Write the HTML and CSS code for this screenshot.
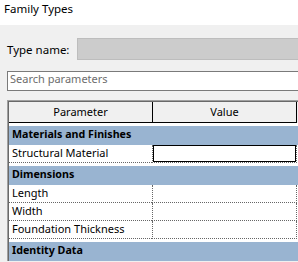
FILE: index.html
```html
<!DOCTYPE html>
<html>
<head>
<meta charset="utf-8">
<link rel="stylesheet" href="styles.css">
</head>
<body>
<div class="title">Family Types</div>
<div class="panel">
  <div class="typerow">
    <span class="label">Type name:</span>
    <div class="typebox"></div>
  </div>
  <div class="search">Search parameters</div>
  <div class="grid">
    <div class="gridin">
      <div class="head">
        <div class="hcell">Parameter</div>
        <div class="hcell">Value</div>
        <div class="hrest"></div>
      </div>
      <div class="section">Materials and Finishes</div>
      <div class="row">
        <div class="pcell">Structural Material</div>
        <div class="vcell"><div class="editbox"></div></div>
      </div>
      <div class="section">Dimensions</div>
      <div class="row">
        <div class="pcell">Length</div>
        <div class="vcell"></div>
      </div>
      <div class="row">
        <div class="pcell">Width</div>
        <div class="vcell"></div>
      </div>
      <div class="row">
        <div class="pcell">Foundation Thickness</div>
        <div class="vcell"></div>
      </div>
      <div class="section">Identity Data</div>
    </div>
  </div>
</div>
</body>
</html>
```

FILE: styles.css
```css
html, body {
  margin: 0;
  padding: 0;
}
body {
  width: 298px;
  height: 262px;
  overflow: hidden;
  background: #f0f0f0;
  font-family: "Segoe UI", "Noto Sans", sans-serif;
  font-size: 11px;
  color: #000;
}
.title {
  height: 25px;
  box-sizing: border-box;
  padding: 1px 0 0 4px;
  line-height: 16px;
  font-size: 11.5px;
  background: #fff;
}
.panel {
  padding-left: 7px;
}
.typerow {
  display: flex;
  align-items: center;
  margin-top: 13px;
}
.label {
  width: 70px;
  font-size: 11.5px;
}
.typebox {
  flex: 1;
  height: 22px;
  box-sizing: border-box;
  background: #cccccc;
  border: 1px solid #bdbdbd;
  border-right: none;
}
.search {
  margin-top: 11px;
  height: 20px;
  box-sizing: border-box;
  border: 1px solid #7a7a7a;
  border-right: none;
  background: #fff;
  padding-left: 2px;
  line-height: 14px;
  color: #6d6d6d;
}
.grid {
  margin-top: 9px;
  border-top: 1px solid #a0a0a0;
  border-left: 1px solid #a0a0a0;
}
.gridin {
  border-top: 1px solid #696969;
  border-left: 1px solid #696969;
  background: #fff;
}
.head {
  display: flex;
  height: 21px;
}
.hcell {
  width: 144px;
  flex: none;
  box-sizing: border-box;
  border-right: 1px solid #000;
  border-bottom: 1px solid #000;
  background: #f0f0f0;
  text-align: center;
  line-height: 20px;
}
.hrest {
  flex: 1;
  background: #f0f0f0;
}
.section {
  margin-top: 3px;
  height: 19px;
  box-sizing: border-box;
  padding: 1px 0 0 3px;
  line-height: 15px;
  background: #99b4d1;
  font-weight: bold;
  font-size: 10.7px;
}
.row {
  display: flex;
  height: 18px;
}
.pcell {
  width: 143px;
  flex: none;
  box-sizing: border-box;
  padding-left: 3px;
  line-height: 16px;
  border-bottom: 1px dotted #666;
}
.vcell {
  width: 145px;
  flex: none;
  box-sizing: border-box;
  border-left: 1px dotted #666;
  border-right: 1px dotted #666;
  border-bottom: 1px dotted #666;
}
.editbox {
  height: 17px;
  box-sizing: border-box;
  border: 1px solid #000;
  background: #fff;
}
```
